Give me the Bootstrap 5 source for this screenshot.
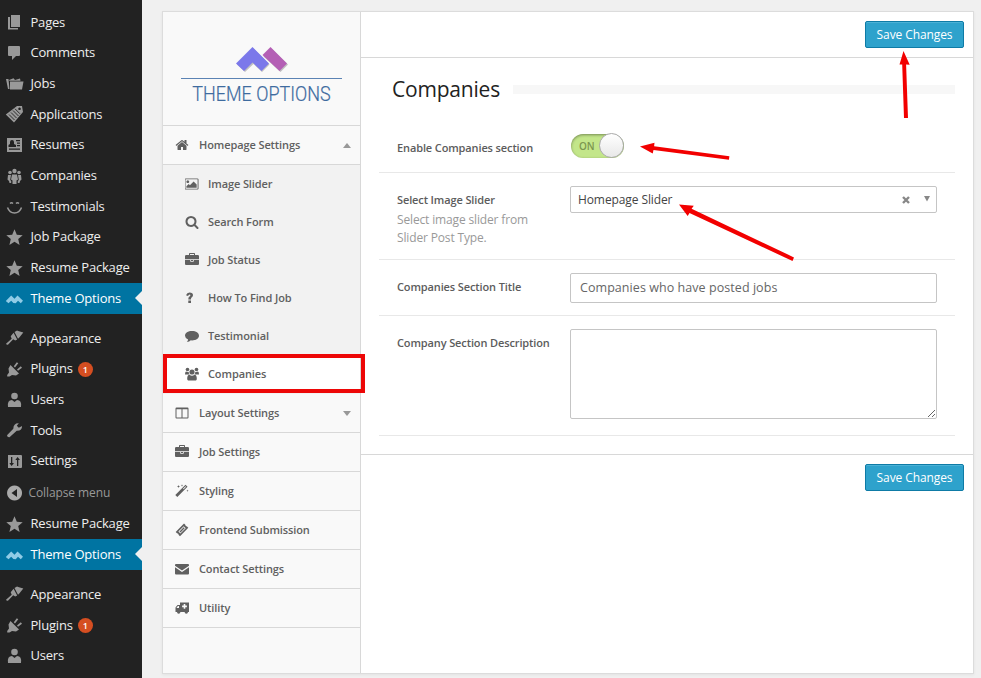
<!DOCTYPE html>
<html lang="en">
<head>
<meta charset="utf-8">
<title>Theme Options</title>
<link rel="stylesheet" href="https://cdn.jsdelivr.net/npm/bootstrap@5.3.0/dist/css/bootstrap.min.css">
<style>
body{font-family:"Open Sans",sans-serif;font-size:13px;background:#f0f0f0;width:981px;height:678px;overflow:hidden;line-height:1.4}
svg{display:block;fill:currentColor;flex:none}
.wp-menu{width:142px;height:678px;background:#222;padding-top:7px;flex:none}
.wp-menu .nav-link{height:30.67px;padding:0 0 1px 5px;color:#eee;display:flex;align-items:center;position:relative;white-space:nowrap;letter-spacing:-.2px}
.wp-menu .nav-link svg{width:19px;height:18px;margin:1px 6.5px 0 0;color:#999}
.wp-menu .nav-link.active{background:#0074a2;color:#fff}
.wp-menu .nav-link.active svg{color:#8fcbe6}
.wp-menu .nav-link.active::after{content:"";position:absolute;right:0;border:7px solid transparent;border-right-color:#f0f0f0;border-left:0}
.wp-menu .fold{color:#999;height:32px;font-size:12px;letter-spacing:-.1px;padding:2px 0 0 5px}
.wp-menu .fold svg{margin:-1px 4.500px 0 0;color:#aaa}
.menu-gap{height:9.5px}
.count{width:15px;height:15px;border-radius:50%;background:#d54e21;color:#fff;font-size:9px;font-weight:600;line-height:15px;text-align:center;margin:1px 0 0 5px}
.panel{width:812px;height:663px;margin:11px 0 0 20px;border:1px solid #dcdcdc;background:#fff;box-shadow:0 1px 3px rgba(0,0,0,.06)}
.side{width:198px;background:#f9f9f9;border-right:1px solid #d8d8d8;flex:none}
.brand{height:114px;border-bottom:1px solid #d8d8d8;padding:34px 18px 0}
.brand-name{border-top:1px solid #5b83b4;color:#3e6b9f;font:300 18px/29px Roboto,sans-serif;margin-top:3px;text-align:center}
.brand-name span{display:inline-block;transform:scaleY(1.08);-webkit-text-stroke:.2px #3e6b9f}
.side .nav-link{height:39px;border-bottom:1px solid #d8d8d8;padding:0 9px 0 12px;color:#606060;font-size:11px;font-weight:600;letter-spacing:-.1px;display:flex;align-items:center;white-space:nowrap}
.side .nav-link svg{width:14px;height:14px;margin-right:10px}
.side .caret{margin-left:auto;border:4px solid transparent;border-bottom:5px solid #999;border-top:0}
.side .caret.down{border:4px solid transparent;border-top:5px solid #999;border-bottom:0}
.side .sub{background:#f2f2f2;padding-bottom:1px}
.side .sub .nav-link{height:38px;border:0;padding-left:22px}
.side .sub .nav-link svg{margin-right:9px}
.side .sub .nav-link.current{background:#fff}
.bar{height:46px;border-bottom:1px solid #d8d8d8;padding:9px 9px 0}
.bar.foot{border:0}
.btn-save{background:#2ea2cc;border:1px solid #0e7ba6;border-radius:2px;color:#fff;font-size:12px;letter-spacing:-.1px;line-height:25px;width:99px;height:27px;padding:0;box-shadow:inset 0 1px 0 rgba(120,200,230,.4)}
.fields{padding:0 18px;height:397px;border-bottom:1px solid #d8d8d8}
.title-row{height:60px;padding:0 0 0 13px}
.title-row h1{font-size:21px;font-weight:400;letter-spacing:-.2px;color:#222;margin:4px 13px 0 0}
.title-row span{height:9px;background:#f7f7f7;margin-top:3px}
.opt{border-bottom:1px solid #e8e8e8;padding-left:18px;font-size:11px}
.opt .name{width:173px;font-weight:600;letter-spacing:-.12px;color:#5c5c5c;line-height:15px;flex:none;white-space:nowrap;padding-top:19px}
.opt.first{height:55px}
.opt.first .name{padding-top:22px}
.opt.pick{height:87px}
.opt.line{height:56px}
.opt.long{height:120px}
.opt .help{font-weight:400;font-size:12px;letter-spacing:-.15px;line-height:18px;color:#999;margin-top:4px}
.box{width:367px;border:1px solid #c5c5c5;border-radius:2px;background:#fff;color:#666;font-size:12.5px;margin-top:13px}
.sel{height:27px;padding:0 6px 0 7px;color:#444;font-size:12px;letter-spacing:-.1px}
.sel span{padding-top:2px}
.sel .drop{margin:-2px 0 0 14px}
.inp{height:30px;padding:0 9px 2px;letter-spacing:.06px}
.area{height:90px;resize:vertical}
.toggle{width:53px;height:24px;margin:16px 0 0 1px;border-radius:12px;background:#c3e68a;box-shadow:inset 0 1px 3px rgba(0,0,0,.4);color:#7b964f;font-size:10px;font-weight:600;line-height:24px;padding-left:8px;position:relative}
.toggle i{position:absolute;right:0;top:-1px;width:25px;height:25px;border-radius:50%;background:linear-gradient(#fff,#e8e8e8);border:1px solid #aaa}
.notes{position:absolute;left:0;top:0;pointer-events:none;fill:#f20000}
</style>
</head>
<body>
<svg width="0" height="0" class="position-absolute">
<symbol id="pages" viewBox="0 0 19 18"><path d="M6 2h9v12H6zM3 4h2v11h8v1.500H3z"/></symbol>
<symbol id="comment" viewBox="0 0 19 18"><path d="M4 2h10q1 0 1 1v8q0 1-1 1h-3l-4 4v-4H4q-1 0-1-1V3q0-1 1-1z"/></symbol>
<symbol id="folders" viewBox="0 0 19 18"><path d="M1 4h2.500l1 10H3zM4 5l4.500-1.800L10 5l5-1.500.5 2.200H4.400zM5 6.500h13.500L17 14.500H5z"/></symbol>
<symbol id="ticket" viewBox="0 0 19 18"><path fill-rule="evenodd" d="M12 1h5l1 6L9 17.500.8 9.500zM14.500 2.500a1.300 1.300 0 1 0 .1 0z"/><path d="M4 9.500l5.500 5.500M6 7.500l5.500 5.500M8 5.500l5.500 5.500M10 3.800l5 5" stroke="#222" stroke-width=".9"/></symbol>
<symbol id="resume" viewBox="0 0 19 18"><path d="M2 2h15v14H2z"/><path fill="#222" d="M5 6a2 2 0 1 1 4 0v2l2 1v2H3.500V9L5 8zM11 4h4v1.200h-4zM12 6.500h3v1.200h-3zM12 9h3v1.200h-3zM4 12.500h11v1.200H4z"/></symbol>
<symbol id="group" viewBox="0 0 19 18"><circle cx="9.500" cy="4" r="2.200"/><circle cx="5" cy="5.500" r="1.800"/><circle cx="14" cy="5.500" r="1.800"/><path d="M7 7.500h5l1 5-1.500 1V17h-4v-3.500L6 12.500zM3 8h3l-.8 5 1 1V16H4.500L4 14 2.500 12.500zM16 8h-3l.8 5-1 1V16h1.700l.5-2 1.500-1.500z"/></symbol>
<symbol id="smile" viewBox="0 0 19 18"><path fill="none" stroke="currentColor" stroke-width="1.500" d="M2.500 10.500q2 5.500 7 5.500t7-5.500M5 6.500q1.500-1.500 3 0M11 6.500q1.500-1.500 3 0"/></symbol>
<symbol id="star" viewBox="0 0 19 18"><path d="M9.500 1.200l2.300 5.500 5.900.5-4.500 3.900 1.400 5.900-5.100-3.200-5.100 3.200 1.400-5.900L1.300 7.200l5.900-.5z"/></symbol>
<symbol id="peaks" viewBox="0 0 19 18"><path d="M6.200 6.500l3.300 3.200 3-3.200 5.500 5.300-2.200 2.400-2.800-2.500-2.300 2.500-2.300-.3-2.200-2.200-2.700 2.500L.8 12z"/></symbol>
<symbol id="brush" viewBox="0 0 19 18"><path d="M9.500 3L12 1.500l2 .8 4.300 1.200-4 5-1.300 1.200zM8.600 3.700l3.600 6.800-2 1-2-1.300-5 5.300q-1.500.8-2.200-.8l5.700-5-1-2.500z"/></symbol>
<symbol id="plug" viewBox="0 0 19 18"><path d="M5.500 5l8.500 8.500-3 2-4-.5-2.500 1.500H2.200V15l1.800-2.500-.5-4zM8.800 6.200l3-4 1.500 1.100-3.300 4.300zM12 9.500l3.800-3.200 1.200 1.500-4 3z"/></symbol>
<symbol id="user" viewBox="0 0 19 18"><circle cx="9.500" cy="5" r="3.300"/><path d="M3 16q-1-7 4-7l2.500 2L12 9q5 0 4 7z"/></symbol>
<symbol id="wrench" viewBox="0 0 19 18"><path d="M17 5q.3 5-5.300 4.800L4.500 16.300q-2.300.3-2.500-2l6.300-6.500Q8.500 2 13.800 2.300L11.800 4.800l2 2z"/></symbol>
<symbol id="sliders" viewBox="0 0 19 18"><path d="M3 3h13q1 0 1 1v11q0 1-1 1H3z"/><path fill="#222" d="M6 5h1.300v6H9l-2.400 3L4.300 11H6zM12 14h1.300V8H15l-2.400-3-2.300 3H12z"/></symbol>
<symbol id="fold" viewBox="0 0 19 18"><path fill-rule="evenodd" d="M9.500 1.500a7.500 7.500 0 1 0 .1 0zM12 5v8L6.500 9z"/></symbol>
<symbol id="home" viewBox="0 0 1792 1792"><path d="M1472 992v480q0 26-19 45t-45 19h-384v-384h-256v384h-384q-26 0-45-19t-19-45v-480q0-1 .5-3t.5-3l575-474 575 474q1 2 1 6zm223-69l-62 74q-8 9-21 11h-3q-13 0-21-7l-692-577-692 577q-12 8-24 7-13-2-21-11l-62-74q-8-10-7-23.500t11-21.500l719-599q32-26 76-26t76 26l244 204v-195q0-14 9-23t23-9h192q14 0 23 9t9 23v408l219 182q10 8 11 21.500t-7 23.500z"/></symbol>
<symbol id="image" viewBox="0 0 1920 1792"><path fill-rule="evenodd" d="M576 576q0 80-56 136t-136 56-136-56-56-136 56-136 136-56 136 56 56 136zm1024 384v448h-1408v-192l320-320 160 160 512-512zm96-704h-1600q-13 0-22.500 9.500t-9.500 22.500v1216q0 13 9.500 22.500t22.500 9.500h1600q13 0 22.500-9.500t9.500-22.500v-1216q0-13-9.500-22.500t-22.500-9.500zm160 32v1216q0 66-47 113t-113 47h-1600q-66 0-113-47t-47-113v-1216q0-66 47-113t113-47h1600q66 0 113 47t47 113z"/></symbol>
<symbol id="search" viewBox="0 0 1792 1792"><path d="M1216 832q0-185-131.500-316.500t-316.500-131.500-316.500 131.500-131.500 316.500 131.500 316.500 316.500 131.500 316.500-131.500 131.500-316.500zm512 832q0 52-38 90t-90 38q-54 0-90-38l-343-342q-179 124-399 124-143 0-273.500-55.500t-225-150-150-225-55.500-273.500 55.500-273.500 150-225 225-150 273.500-55.500 273.500 55.500 225 150 150 225 55.500 273.500q0 220-124 399l343 343q37 37 37 90z"/></symbol>
<symbol id="case" viewBox="0 0 1792 1792"><path d="M640 256h512v-128h-512v128zm1152 640v480q0 66-47 113t-113 47h-1472q-66 0-113-47t-47-113v-480h672v160q0 26 19 45t45 19h320q26 0 45-19t19-45v-160h672zm-768 0v128h-256v-128h256zm768-480v384h-1792v-384q0-66 47-113t113-47h352v-160q0-40 28-68t68-28h576q40 0 68 28t28 68v160h352q66 0 113 47t47 113z"/></symbol>
<symbol id="help" viewBox="0 0 14 14"><path d="M3.300 9.500h2.700V12H3.300zM1 4.200Q2 1.500 4.500 1.500q3.500 0 3.500 2.800 0 1.500-1.600 2.400Q6 7 6 8.500H3.300q-.1-2.300 1.200-3 .9-.6.900-1.200 0-.7-.9-.7-.8 0-1.500 1.500z"/></symbol>
<symbol id="talk" viewBox="0 0 14 14"><path d="M7 2c4 0 7 2 7 4.700s-3 4.700-7 4.700l-1.200-.1Q4.500 12.700 1.800 13q1-1 1.300-2.600Q0 9 0 6.700C0 4 3 2 7 2z"/></symbol>
<symbol id="users" viewBox="0 0 14 14"><circle cx="7" cy="5" r="2.600"/><circle cx="2.500" cy="2.500" r="1.800"/><circle cx="11.500" cy="2.500" r="1.800"/><path d="M3.200 13.500q-1 0-1-1.800 0-3.800 2.300-3.900Q7 9.500 9.500 7.800q2.300 0 2.300 3.900 0 1.800-1 1.800zM0 7.500Q0 5 1 4.500q1.500.8 2.700.2 0 1.900.8 2.800H0zM14 7.500q0-2.500-1-3-1.500.8-2.700.2 0 1.900-.8 2.800H14z"/></symbol>
<symbol id="columns" viewBox="0 0 14 14"><path fill-rule="evenodd" d="M1.500 1.500h11q1 0 1 1v9q0 1-1 1h-11q-1 0-1-1v-9q0-1 1-1zM1.500 3.300v8.200h5V3.300zm6 0v8.200h5V3.300z"/></symbol>
<symbol id="wand" viewBox="0 0 14 14"><path fill-rule="evenodd" d="M10.500.8l2 2L2.300 13 .3 11zm0 1.400L8 4.700l.6.600 2.500-2.500zM3.500 1l.4 1.100 1.100.4-1.100.4L3.500 4l-.4-1.100L2 2.500l1.100-.4zM7 .3l.3.900.9.300-.9.300L7 2.700l-.3-.9-.9-.3.900-.3zM12.500 5.500l.3.900.9.300-.9.300-.3.900-.3-.9-.9-.3.900-.3z"/></symbol>
<symbol id="pass" viewBox="0 0 14 14"><path fill-rule="evenodd" d="M9 .5l1.300 1.300q0 1.700 1.700 1.700l1.300 1.300L5 13.200l-1.300-1.300q0-1.700-1.700-1.700L.7 8.900zM8.700 3.200L3.400 8.500l2 2 5.300-5.300z"/><path d="M8.700 4.300l1 1-4.200 4.200-1-1z"/></symbol>
<symbol id="mail" viewBox="0 0 14 14"><path d="M1 2h12q1 0 1 1v.7L7 8.500 0 3.700V3q0-1 1-1zM0 5.200l7 4.800 7-4.800V11.500q0 1-1 1H1q-1 0-1-1z"/></symbol>
<symbol id="van" viewBox="0 0 14 14"><path fill-rule="evenodd" d="M5 1.500h9V11h-1a1.700 1.700 0 0 1-3.400 0H5.400A1.700 1.700 0 0 1 2 11H.5V6.500L2.500 4H5zM2.900 5L1.600 6.800V7H4V5zM8.700 3v1.600H7.100v1.600h1.600v1.600h1.600V6.200h1.600V4.600h-1.600V3z"/></symbol>
</svg>

<div class="d-flex">
<nav class="wp-menu nav flex-column flex-nowrap">
<a class="nav-link"><svg><use href="#pages"/></svg>Pages</a>
<a class="nav-link"><svg><use href="#comment"/></svg>Comments</a>
<a class="nav-link"><svg><use href="#folders"/></svg>Jobs</a>
<a class="nav-link"><svg><use href="#ticket"/></svg>Applications</a>
<a class="nav-link"><svg><use href="#resume"/></svg>Resumes</a>
<a class="nav-link"><svg><use href="#group"/></svg>Companies</a>
<a class="nav-link"><svg><use href="#smile"/></svg>Testimonials</a>
<a class="nav-link"><svg><use href="#star"/></svg>Job Package</a>
<a class="nav-link"><svg><use href="#star"/></svg>Resume Package</a>
<a class="nav-link active"><svg><use href="#peaks"/></svg>Theme Options</a>
<div class="menu-gap"></div>
<a class="nav-link"><svg><use href="#brush"/></svg>Appearance</a>
<a class="nav-link"><svg><use href="#plug"/></svg>Plugins<span class="count">1</span></a>
<a class="nav-link"><svg><use href="#user"/></svg>Users</a>
<a class="nav-link"><svg><use href="#wrench"/></svg>Tools</a>
<a class="nav-link"><svg><use href="#sliders"/></svg>Settings</a>
<a class="nav-link fold"><svg><use href="#fold"/></svg>Collapse menu</a>
<a class="nav-link"><svg><use href="#star"/></svg>Resume Package</a>
<a class="nav-link active"><svg><use href="#peaks"/></svg>Theme Options</a>
<div class="menu-gap"></div>
<a class="nav-link"><svg><use href="#brush"/></svg>Appearance</a>
<a class="nav-link"><svg><use href="#plug"/></svg>Plugins<span class="count">1</span></a>
<a class="nav-link"><svg><use href="#user"/></svg>Users</a>
</nav>

<main class="panel d-flex">
<aside class="side">
<div class="brand">
<svg class="mx-auto" width="54" height="29" viewBox="0 0 54 29"><g fill="#555" opacity=".35" transform="translate(1 1)"><path d="M17.500 1.500l16 16-7.500 7.500-8.500-8-8.500 8L1 17.500zM35.500 1.500L52 17.500 44.500 25l-17-15.500z"/></g><path fill="#b45fb5" d="M35.500 1L52 17.500 44.500 25 27.500 9z"/><path fill="#7b78ea" d="M17.500 1l16.500 16.500L26.500 25l-9-8.500L9 25 1 17.500z"/></svg>
<div class="brand-name"><span>THEME OPTIONS</span></div>
</div>
<nav class="nav flex-column">
<a class="nav-link"><svg><use href="#home"/></svg>Homepage Settings<span class="caret"></span></a>
<div class="sub">
<a class="nav-link"><svg><use href="#image"/></svg>Image Slider</a>
<a class="nav-link"><svg><use href="#search"/></svg>Search Form</a>
<a class="nav-link"><svg><use href="#case"/></svg>Job Status</a>
<a class="nav-link"><svg><use href="#help"/></svg>How To Find Job</a>
<a class="nav-link"><svg><use href="#talk"/></svg>Testimonial</a>
<a class="nav-link current"><svg><use href="#users"/></svg>Companies</a>
</div>
<a class="nav-link"><svg><use href="#columns"/></svg>Layout Settings<span class="caret down"></span></a>
<a class="nav-link"><svg><use href="#case"/></svg>Job Settings</a>
<a class="nav-link"><svg><use href="#wand"/></svg>Styling</a>
<a class="nav-link"><svg><use href="#pass"/></svg>Frontend Submission</a>
<a class="nav-link"><svg><use href="#mail"/></svg>Contact Settings</a>
<a class="nav-link"><svg><use href="#van"/></svg>Utility</a>
</nav>
</aside>
<section class="flex-grow-1">
<div class="bar d-flex justify-content-end"><button class="btn btn-save">Save Changes</button></div>
<div class="fields">
<div class="title-row d-flex align-items-center"><h1>Companies</h1><span class="flex-grow-1"></span></div>
<div class="opt first d-flex"><div class="name">Enable Companies section</div><div class="toggle">ON<i></i></div></div>
<div class="opt pick d-flex"><div class="name">Select Image Slider<div class="help">Select image slider from<br>Slider Post Type.</div></div>
<div class="box sel d-flex align-items-center"><span>Homepage Slider</span><svg class="ms-auto" width="8" height="8" viewBox="0 0 8 8"><path d="M1 1l6 6M7 1L1 7" stroke="#888" stroke-width="2.400"/></svg><svg class="drop" width="6" height="6" viewBox="0 0 6 6"><path fill="#888" d="M0 0h6L3 5.500z"/></svg></div></div>
<div class="opt line d-flex"><div class="name">Companies Section Title</div><input class="box inp" value="Companies who have posted jobs"></div>
<div class="opt long d-flex"><div class="name">Company Section Description</div><textarea class="box area"></textarea></div>
</div>
<div class="bar foot d-flex justify-content-end"><button class="btn btn-save">Save Changes</button></div>
</section>
</main>
</div>
<svg class="notes" width="981" height="678" viewBox="0 0 981 678"><path fill="none" stroke="#ed0707" stroke-width="4" d="M165 356h198v35H165z"/><path d="M903.500 51l6.200 13.800-3.600-.3L908 118h-4l-1.800-53.500h-2.700zM640 146.500l14.500-3.800-.4 3.500 75.300 10-.5 3.500-75.400-9.700-.8 3.500zM679 204.500l14.800 1.200-2.200 3 102.400 48.700-1.500 3.600-103-48-1.800 3z"/></svg>
<script src="https://cdn.jsdelivr.net/npm/bootstrap@5.3.0/dist/js/bootstrap.bundle.min.js"></script>
</body>
</html>
